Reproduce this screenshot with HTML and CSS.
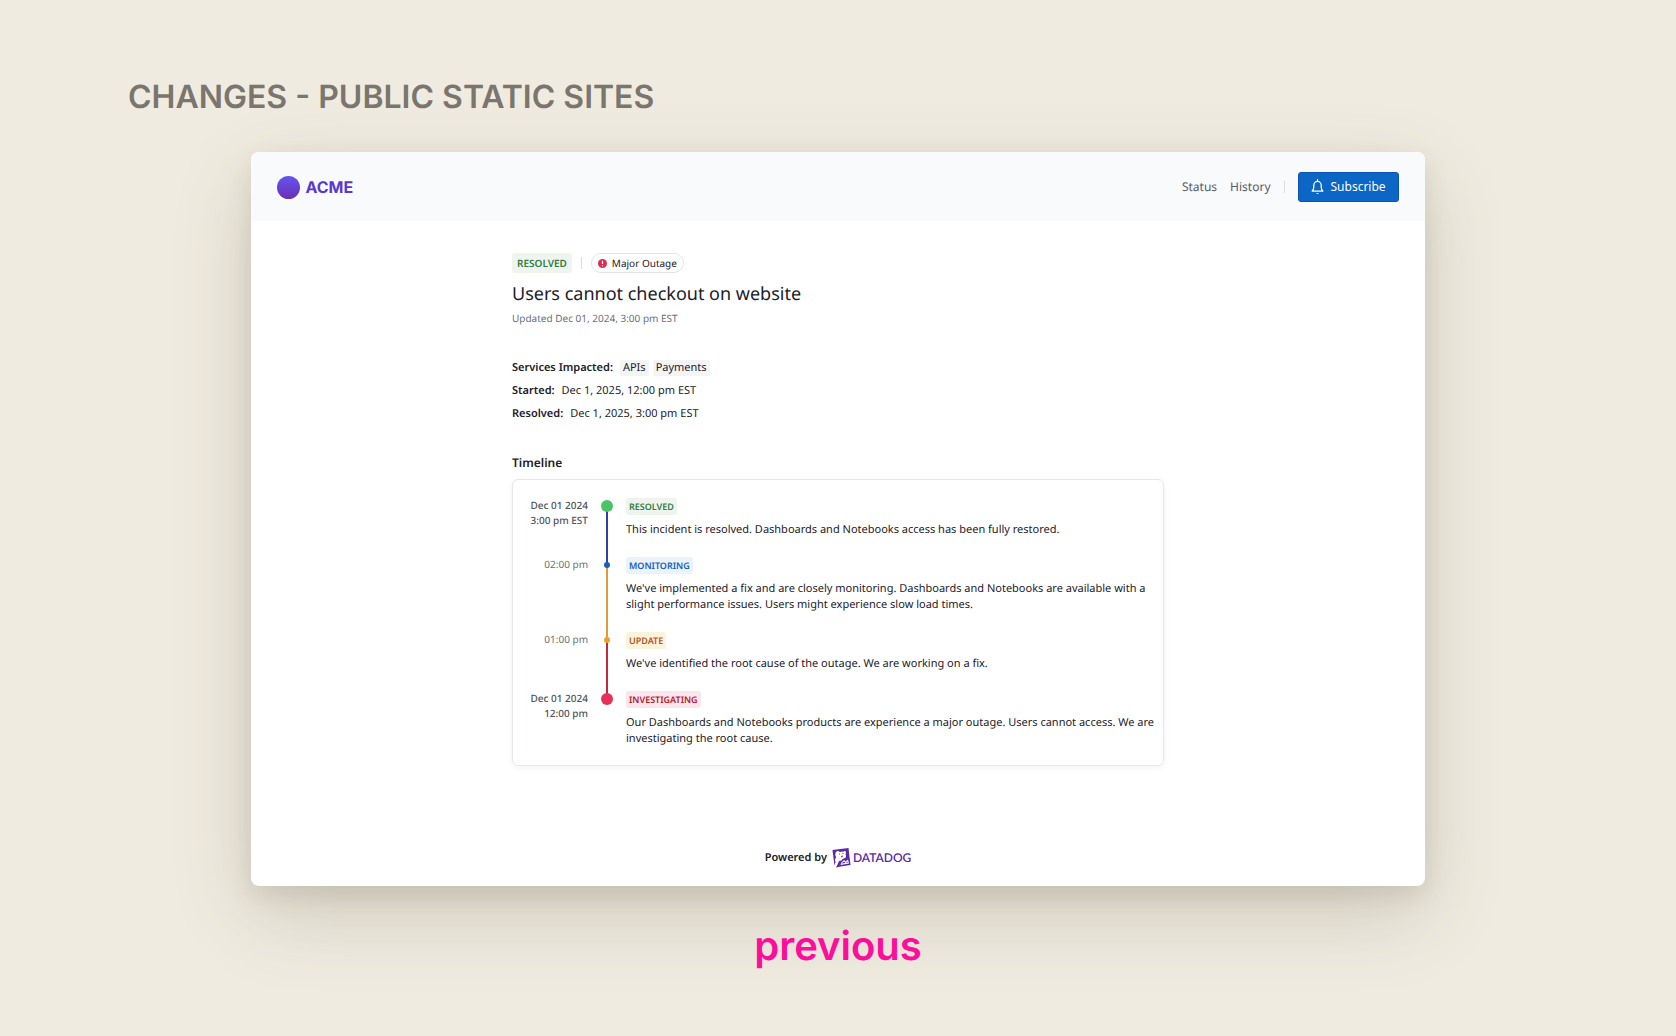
FILE: index.html
```
<!DOCTYPE html>
<html lang="en">
<head>
    <meta charset="UTF-8">
    <meta name="viewport" content="width=device-width, initial-scale=1.0">
    <title>Changes - Public Static Sites</title>
    <link rel="stylesheet" href="styles.css">
</head>
<body>
    <h1 class="board-title">CHANGES - PUBLIC STATIC SITES</h1>

    <div class="card">
        <header class="header">
            <a class="logo" href="#">
                <span class="logo-mark"></span>
                ACME
            </a>
            <nav class="nav">
                <a href="#">Status</a>
                <a href="#">History</a>
                <span class="divider"></span>
                <button class="subscribe" type="button">
                    <svg width="13" height="16" viewBox="0 0 12 15" fill="none" stroke="currentColor" stroke-width="1.2" stroke-linejoin="round" stroke-linecap="round">
                        <path d="M6 .7v1.2M1 11.3c1.2-1 1.5-2.200 1.500-3.800V6a3.500 3.700 0 0 1 7 0v1.500c0 1.600.300 2.800 1.500 3.800z"/>
                        <path d="M4.800 13.200a1.300 1.300 0 0 0 2.400 0z" fill="currentColor" stroke="none"/>
                    </svg>
                    Subscribe
                </button>
            </nav>
        </header>

        <main class="content">
            <div class="status-row">
                <span class="badge badge-large green">RESOLVED</span>
                <span class="divider"></span>
                <span class="pill">
                    <svg width="9" height="9" viewBox="0 0 9 9">
                        <circle cx="4.500" cy="4.500" r="4.500" fill="#dc2d50"/>
                        <path d="M4.500 1.800v3.200M4.500 6.200v1.100" stroke="#fff" stroke-width="1.200"/>
                    </svg>
                    Major Outage
                </span>
            </div>
            <h2 class="title">Users cannot checkout on website</h2>
            <p class="updated">Updated Dec 01, 2024, 3:00 pm EST</p>

            <dl class="details">
                <div class="detail">
                    <dt>Services Impacted:</dt>
                    <dd class="tags"><span class="tag">APIs</span><span class="tag">Payments</span></dd>
                </div>
                <div class="detail">
                    <dt>Started:</dt>
                    <dd>Dec 1, 2025, 12:00 pm EST</dd>
                </div>
                <div class="detail">
                    <dt>Resolved:</dt>
                    <dd>Dec 1, 2025, 3:00 pm EST</dd>
                </div>
            </dl>

            <h3 class="section-title">Timeline</h3>
            <ol class="timeline">
                <li class="event">
                    <div class="time major">Dec 01 2024<br>3:00 pm EST</div>
                    <div class="track to-blue"><span class="dot big dot-green"></span></div>
                    <div class="event-body">
                        <span class="badge green">RESOLVED</span>
                        <p>This incident is resolved. Dashboards and Notebooks access has been fully restored.</p>
                    </div>
                </li>
                <li class="event">
                    <div class="time">02:00 pm</div>
                    <div class="track to-orange"><span class="dot dot-blue"></span></div>
                    <div class="event-body">
                        <span class="badge blue">MONITORING</span>
                        <p>We've implemented a fix and are closely monitoring. Dashboards and Notebooks are available with a slight performance issues. Users might experience slow load times.</p>
                    </div>
                </li>
                <li class="event">
                    <div class="time">01:00 pm</div>
                    <div class="track to-red"><span class="dot dot-orange"></span></div>
                    <div class="event-body">
                        <span class="badge orange">UPDATE</span>
                        <p>We've identified the root cause of the outage. We are working on a fix.</p>
                    </div>
                </li>
                <li class="event">
                    <div class="time major">Dec 01 2024<br>12:00 pm</div>
                    <div class="track"><span class="dot big dot-red"></span></div>
                    <div class="event-body">
                        <span class="badge red">INVESTIGATING</span>
                        <p>Our Dashboards and Notebooks products are experience a major outage. Users cannot access. We are investigating the root cause.</p>
                    </div>
                </li>
            </ol>
        </main>

        <footer class="footer">
            Powered by
            <a class="vendor" href="#">
                <svg width="19" height="20" viewBox="0 0 38 40">
                    <path d="M1 4 33 0l4 34-20 3-8 2-4-3z" fill="#5b2aa5"/>
                    <path d="M9 7c2-2 5-1 6 1l8-1c2-2 5-1 5 2l-1 4c2 3 1 6-1 7l-5 2-2 3-5 1-3 7-3 6-5-1 4-9-1-6c1-2 2-3 2-5-2-3-2-9 1-11z" fill="#fff"/>
                    <path d="m19 29 5-5 3 3 5-4 2 8-17 3z" fill="#fff"/>
                    <path d="m20 30 4-3 3 3 4-3 1 2-12 2z" fill="#5b2aa5"/>
                    <circle cx="15" cy="12" r="1.200" fill="#5b2aa5"/>
                    <circle cx="22" cy="11" r="1.200" fill="#5b2aa5"/>
                    <path d="m18 16 4-1-1 3-2 1z" fill="#5b2aa5"/>
                </svg>
                DATADOG
            </a>
        </footer>
    </div>

    <p class="caption">previous</p>
</body>
</html>
```

FILE: styles.css
```
* {
    margin: 0;
    padding: 0;
    box-sizing: border-box;
}

body {
    min-height: 100vh;
    padding: 77px 0 50px;
    background-color: #f0ebe0;
    font-family: "Noto Sans", sans-serif;
    font-size: 11px;
    line-height: 16px;
    text-rendering: geometricPrecision;
    color: #1c2029;
}

a {
    color: inherit;
    text-decoration: none;
}

.board-title {
    margin: 0 128px 35px;
    font-family: Inter, sans-serif;
    font-size: 32px;
    font-weight: 600;
    line-height: 40px;
    color: #7a766e;
}

.card {
    width: 70%;
    margin: 0 auto;
    background-color: white;
    border-radius: 8px;
    overflow: hidden;
    box-shadow: 0 28px 80px rgba(80, 76, 50, 0.2), 0 10px 24px rgba(80, 76, 50, 0.12);
}

.header {
    display: flex;
    align-items: center;
    justify-content: space-between;
    padding: 20px 26px 19px;
    background-color: #f9fafc;
}

.logo {
    display: flex;
    align-items: center;
    gap: 5px;
    font-family: Inter, sans-serif;
    font-size: 16px;
    font-weight: 700;
    color: #5a38cc;
}

.logo-mark {
    width: 23px;
    height: 23px;
    border-radius: 50%;
    background: linear-gradient(#6455ee, #6a2fb5);
}

.nav {
    display: flex;
    align-items: center;
    gap: 13px;
    font-size: 12px;
    color: #585b63;
}

.divider {
    width: 1px;
    height: 12px;
    background-color: #d8dbe0;
}

.subscribe {
    display: flex;
    align-items: center;
    gap: 7px;
    height: 30px;
    padding: 0 12px;
    border: 1px solid #0c54b0;
    border-radius: 3px;
    background-color: #0b66c6;
    color: white;
    font: inherit;
    cursor: pointer;
}

.content {
    max-width: 652px;
    margin: 0 auto;
    padding: 32px 0 82px;
}

.status-row {
    display: flex;
    align-items: center;
    gap: 9px;
}

.badge {
    display: inline-block;
    padding: 0 3px;
    border-radius: 3px;
    font-size: 9px;
    font-weight: 600;
    line-height: 17px;
}

.badge-large {
    padding: 0 5px;
    font-size: 10px;
    line-height: 20px;
}

.green {
    background-color: #eff5ee;
    color: #2f7d42;
}

.blue {
    background-color: #ebf2f8;
    color: #1560bd;
}

.orange {
    background-color: #fbf3da;
    color: #b3571d;
}

.red {
    background-color: #fae6ec;
    color: #b4202f;
}

.pill {
    display: flex;
    align-items: center;
    gap: 5px;
    height: 20px;
    padding: 0 6px;
    border: 1px solid #e2e4e8;
    border-radius: 10px;
    font-size: 10px;
}

.title {
    margin-top: 7px;
    font-size: 18px;
    font-weight: 400;
    line-height: 28px;
}

.updated {
    margin-top: 2px;
    font-size: 10px;
    color: #6c6f77;
}

.details {
    display: flex;
    flex-direction: column;
    gap: 7px;
    margin-top: 34px;
}

.detail {
    display: flex;
    gap: 7px;
}

dt {
    font-weight: 600;
}

.tags {
    display: flex;
    gap: 4px;
}

.tag {
    padding: 0 3px;
    border-radius: 2px;
    background-color: #f3f4f5;
}

.section-title {
    margin-top: 33px;
    font-size: 12px;
    font-weight: 600;
}

.timeline {
    margin-top: 8px;
    padding: 18px 6px 18px 17px;
    border: 1px solid #e6e7ea;
    border-radius: 6px;
    list-style: none;
    box-shadow: 0 2px 6px rgba(0, 0, 0, 0.05);
}

.event {
    display: grid;
    grid-template-columns: 58px 38px 1fr;
}

.time {
    font-size: 10px;
    line-height: 15px;
    text-align: right;
    color: #6c6f77;
}

.major {
    font-weight: 500;
    color: #50535b;
}

/* the line runs from this dot down to the next one */
.track {
    display: flex;
    justify-content: center;
    margin-bottom: -8px;
    padding-top: 8px;
}

.to-blue {
    background: linear-gradient(#3340a0, #3340a0) center 8px / 2px 100% no-repeat;
}

.to-orange {
    background: linear-gradient(#e09a3a, #e09a3a) center 8px / 2px 100% no-repeat;
}

.to-red {
    background: linear-gradient(#c4283c, #c4283c) center 8px / 2px 100% no-repeat;
}

.dot {
    width: 6px;
    height: 6px;
    margin-top: -3px;
    border-radius: 50%;
}

.big {
    width: 12px;
    height: 12px;
    margin-top: -6px;
}

.dot-green {
    background-color: #4cc366;
}

.dot-blue {
    background-color: #1560bd;
}

.dot-orange {
    background-color: #eba02c;
}

.dot-red {
    background-color: #e5305a;
}

.event-body p {
    margin: 7px 0 19px;
}

.event:last-child p {
    margin-bottom: 0;
}

.footer {
    display: flex;
    align-items: center;
    justify-content: center;
    gap: 5px;
    padding-bottom: 18px;
    font-weight: 600;
}

.vendor {
    display: flex;
    align-items: center;
    gap: 2px;
    font-family: Lato, sans-serif;
    font-size: 12px;
    font-weight: 600;
    color: #5b2aa5;
}

.caption {
    margin-top: 36px;
    font-family: Inter, sans-serif;
    font-size: 40px;
    font-weight: 600;
    line-height: 48px;
    text-align: center;
    color: #fc0d9b;
}
```
